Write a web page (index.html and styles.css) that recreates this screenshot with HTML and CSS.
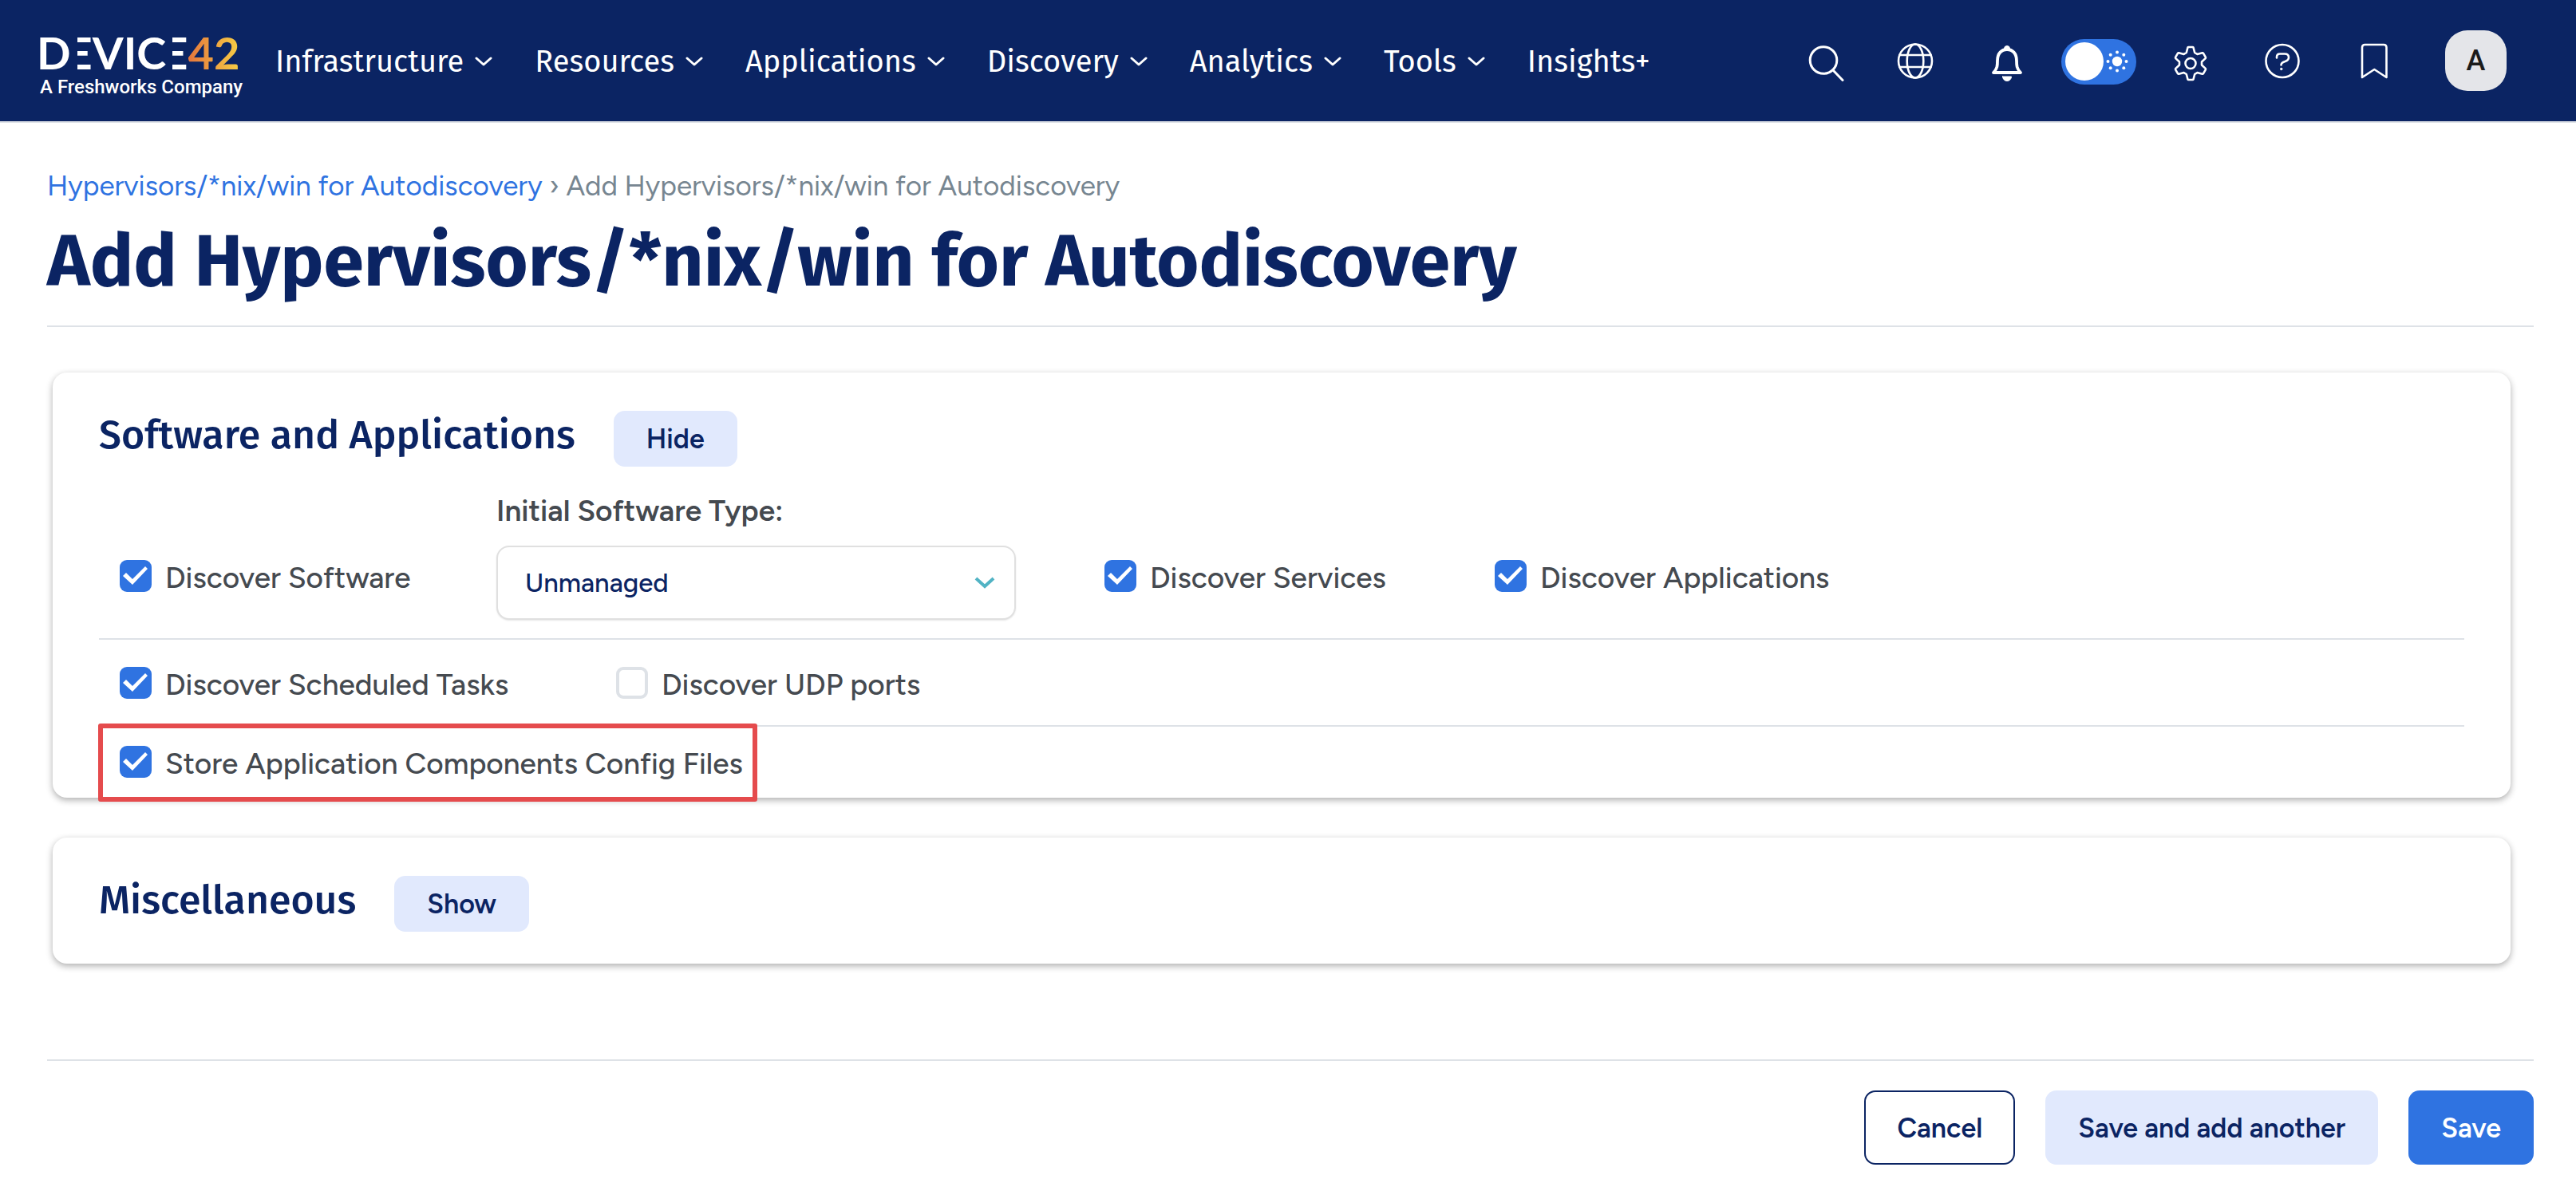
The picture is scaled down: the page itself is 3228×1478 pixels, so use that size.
FILE: index.html
```html
<!DOCTYPE html>
<html lang="en">
<head>
<meta charset="utf-8">
<title>Add Hypervisors/*nix/win for Autodiscovery</title>
<link rel="stylesheet" href="styles.css">
</head>
<body>
<header class="topbar">
  <a class="logo" href="#">
    <span class="logo-name">D<span class="bars">E</span>VIC<span class="bars">E</span><span class="amber">42</span></span>
    <span class="logo-tag">A Freshworks Company</span>
  </a>

  <nav class="menu" aria-label="Main">
    <button class="menu-item" type="button">Infrastructure <svg class="caret" viewBox="0 0 22 14"><path d="M2 3l9 8 9-8"/></svg></button>
    <button class="menu-item" type="button">Resources <svg class="caret" viewBox="0 0 22 14"><path d="M2 3l9 8 9-8"/></svg></button>
    <button class="menu-item" type="button">Applications <svg class="caret" viewBox="0 0 22 14"><path d="M2 3l9 8 9-8"/></svg></button>
    <button class="menu-item" type="button">Discovery <svg class="caret" viewBox="0 0 22 14"><path d="M2 3l9 8 9-8"/></svg></button>
    <button class="menu-item" type="button">Analytics <svg class="caret" viewBox="0 0 22 14"><path d="M2 3l9 8 9-8"/></svg></button>
    <button class="menu-item" type="button">Tools <svg class="caret" viewBox="0 0 22 14"><path d="M2 3l9 8 9-8"/></svg></button>
    <a class="menu-item" href="#">Insights+</a>
  </nav>

  <div class="tools">
    <button class="tool" type="button" aria-label="Search">
      <svg class="icon" viewBox="0 0 52 52"><circle cx="26" cy="25.5" r="16.8"/><path d="M38 38l12 12.5"/></svg>
    </button>
    <button class="tool" type="button" aria-label="Language">
      <svg class="icon thin" viewBox="0 0 52 52"><circle cx="26" cy="26.5" r="21"/><ellipse cx="26" cy="26.5" rx="10.3" ry="21"/><path d="M6.500 19h39M6.500 34h39"/></svg>
    </button>
    <button class="tool" type="button" aria-label="Notifications">
      <svg class="icon bell" viewBox="0 0 52 52"><path d="M9 41c5-5 5-9 5-15 0-9 5-14 12-14s12 5 12 14c0 6 0 10 5 15z"/><path class="solid" d="M22.500 13v-2a3.500 3.500 0 0 1 7 0v2zM20.500 46h11a5.500 5.500 0 0 1-11 0z"/></svg>
    </button>
    <label class="tool theme">
      <input class="theme-input" type="checkbox" role="switch" aria-label="Light theme">
      <svg class="sun" viewBox="0 0 28 28"><circle cx="14" cy="14" r="6.200"/><circle cx="14" cy="2.500" r="2"/><circle cx="14" cy="25.500" r="2"/><circle cx="2.500" cy="14" r="2"/><circle cx="25.500" cy="14" r="2"/><circle cx="5.700" cy="5.700" r="2"/><circle cx="22.300" cy="5.700" r="2"/><circle cx="5.700" cy="22.300" r="2"/><circle cx="22.300" cy="22.300" r="2"/></svg>
    </label>
    <button class="tool" type="button" aria-label="Settings">
      <svg class="icon thin" viewBox="0 0 52 52"><circle cx="26" cy="29.500" r="6.500"/><path d="M22.500 9.500Q22.700 9 23.500 9h5q.8 0 1 .5l1.700 6.500 3.200 1.900 6.300-1.600q.8-.2 1.200.4l2.900 5q.4.800-.1 1.400L40 27.500v4l4.700 4.400q.5.600.1 1.400l-2.900 5q-.4.600-1.200.4l-6.300-1.600-3.200 1.900-1.700 6.500q-.2.500-1 .5h-5q-.8 0-1-.5L20.800 43l-3.200-1.900-6.300 1.600q-.8.200-1.200-.4l-2.900-5q-.4-.8.100-1.400L12 31.500v-4l-4.700-4.400q-.5-.6-.1-1.400l2.900-5q.4-.6 1.200-.4l6.300 1.600 3.200-1.900z"/></svg>
    </button>
    <button class="tool" type="button" aria-label="Help">
      <svg class="icon thin" viewBox="0 0 52 52"><circle cx="26" cy="26.500" r="20.500"/><path d="M19 22.500v-1q0-4 4-4h6q5 0 5 4.500 0 3.500-4.500 5-5 1.500-5 4.500"/><circle class="solid" cx="24.700" cy="36.500" r="1.200"/></svg>
    </button>
    <button class="tool" type="button" aria-label="Bookmarks">
      <svg class="icon thin" viewBox="0 0 52 52"><path d="M11 47V9.500q0-3.500 3.500-3.500h23.500q3.500 0 3.500 3.500V47L26.300 37z"/></svg>
    </button>
    <button class="avatar" type="button" aria-label="Account">A</button>
  </div>
</header>

<main class="page">
  <nav class="crumbs" aria-label="Breadcrumb"><a class="crumb-link" href="#">Hypervisors/*nix/win for Autodiscovery</a> › Add Hypervisors/*nix/win for Autodiscovery</nav>
  <h1 class="title">Add Hypervisors/*nix/win for Autodiscovery</h1>

  <form class="form">
    <section class="card">
      <div class="card-head">
        <h2 class="card-title">Software and Applications</h2>
        <button class="btn btn-small" type="button">Hide</button>
      </div>
      <div class="row row-types">
        <label class="check check-side"><input class="box" type="checkbox" checked>Discover Software</label>
        <div class="field">
          <label class="field-label" for="software-type">Initial Software Type:</label>
          <div class="select-wrap">
            <select class="select" id="software-type"><option>Unmanaged</option><option>Managed</option></select>
            <svg class="select-caret" viewBox="0 0 26 18"><path d="M2 3l11 10L24 3"/></svg>
          </div>
        </div>
        <label class="check check-side"><input class="box" type="checkbox" checked>Discover Services</label>
        <label class="check check-side"><input class="box" type="checkbox" checked>Discover Applications</label>
      </div>
      <div class="row row-pair">
        <label class="check"><input class="box" type="checkbox" checked>Discover Scheduled Tasks</label>
        <label class="check"><input class="box" type="checkbox">Discover UDP ports</label>
      </div>
      <div class="row row-single">
        <label class="check callout"><input class="box" type="checkbox" checked>Store Application Components Config Files</label>
      </div>
    </section>

    <section class="card card-closed">
      <div class="card-head">
        <h2 class="card-title">Miscellaneous</h2>
        <button class="btn btn-small" type="button">Show</button>
      </div>
    </section>

    <div class="actions">
      <button class="btn btn-outline" type="button">Cancel</button>
      <button class="btn" type="button">Save and add another</button>
      <button class="btn btn-primary" type="submit">Save</button>
    </div>
  </form>
</main>
</body>
</html>
```
FILE: styles.css
```css
:root {
  --navy: #0b2463;
  --blue: #2f73e1;
  --pale: #e1e9fd;
  --line: #dee2e7;
  --text: #454a50;
  --head-font: "Fira Sans", "Noto Sans", "Open Sans", sans-serif;
  --body-font: Figtree, Lato, "Liberation Sans", sans-serif;
}

* { box-sizing: border-box; }

body {
  margin: 0;
  background: #fff;
  color: var(--text);
  font: 500 37px/40px var(--body-font);
}

button { font: inherit; cursor: pointer; }

/* Top bar */
.topbar {
  display: flex;
  align-items: center;
  height: 154px;
  padding: 0 87px 0 46px;
  background: var(--navy);
  border-bottom: 2px solid var(--line);
}

.logo {
  display: flex;
  flex-direction: column;
  width: 256px;
  margin: 8px 43px 0 0;
  color: #fff;
  text-decoration: none;
}
.logo-name {
  font: 700 56px/58px Lato, sans-serif;
  white-space: nowrap;
}
/* The wordmark's E has no stem, only its three bars */
.bars {
  margin-left: -5px;
  background: linear-gradient(to right, transparent 13px, #fff 13px);
  background-clip: text;
  -webkit-background-clip: text;
  color: transparent;
}
.amber {
  background: linear-gradient(to right, #e5763c, #f7cf45);
  background-clip: text;
  -webkit-background-clip: text;
  color: transparent;
}
.logo-tag {
  padding-left: 4px;
  font: 500 24px/28px Roboto, sans-serif;
  white-space: nowrap;
}

.menu {
  display: flex;
  align-items: center;
  gap: 53px;
  padding-top: 2px;
}
.menu-item {
  display: flex;
  align-items: center;
  gap: 14px;
  padding: 0;
  border: 0;
  background: none;
  color: #fff;
  font: 400 38px/48px var(--head-font);
  text-decoration: none;
  white-space: nowrap;
}
.caret {
  width: 22px;
  height: 14px;
  fill: none;
  stroke: #fff;
  stroke-width: 3;
  stroke-linecap: round;
  stroke-linejoin: round;
}

.tools {
  display: flex;
  align-items: center;
  margin-left: auto;
}
.tool {
  display: flex;
  justify-content: center;
  width: 115px;
  padding: 0;
  border: 0;
  background: none;
}
.icon {
  width: 52px;
  height: 52px;
  fill: none;
  stroke: #fff;
  stroke-width: 3;
  stroke-linecap: round;
  stroke-linejoin: round;
}
.icon.thin { stroke-width: 2.6; }
.icon.bell { stroke-width: 3.8; }
.icon .solid { fill: #fff; stroke-width: 1; }

.theme {
  position: relative;
  padding-top: 2px;
}
.theme-input {
  appearance: none;
  display: flex;
  align-items: center;
  width: 94px;
  height: 57px;
  margin: 0;
  padding: 0 5px;
  border-radius: 29px;
  background: var(--blue);
}
.theme-input::before {
  content: "";
  width: 48px;
  height: 48px;
  border-radius: 50%;
  background: #fff;
}
.sun {
  position: absolute;
  top: 16px;
  right: 20px;
  width: 28px;
  height: 28px;
  fill: #fff;
}

.avatar {
  width: 77px;
  height: 76px;
  margin-left: 32px;
  padding: 0;
  border: 0;
  border-radius: 28px;
  background: #e4e5e9;
  color: #1b1b1b;
  font: 500 36px/76px Roboto, sans-serif;
}

/* Page heading */
.page { padding: 58px 53px 18px 59px; }

.crumbs {
  color: #778691;
  font-size: 35px;
  font-weight: 400;
  line-height: 42px;
}
.crumb-link {
  color: var(--blue);
  text-decoration: none;
}

.title {
  margin: 26px 0 57px;
  padding-bottom: 32px;
  border-bottom: 2px solid var(--line);
  color: var(--navy);
  font: 700 91px/96px var(--head-font);
}

/* Cards */
.card {
  margin: 0 29px 50px 7px;
  padding: 48px 58px 0;
  border-radius: 18px;
  background: #fff;
  box-shadow: 0 3px 8px rgba(0, 0, 0, .32);
}
.card-closed {
  margin-bottom: 120px;
  padding-bottom: 40px;
}
.card-head {
  display: flex;
  align-items: baseline;
  gap: 48px;
}
.card-title {
  margin: 0;
  color: var(--navy);
  font: 500 50px/48px var(--head-font);
}

.row {
  padding-left: 26px;
  border-bottom: 2px solid var(--line);
}
.row-types {
  display: grid;
  grid-template-columns: 472px 762px 489px auto;
  align-items: end;
  margin-top: 35px;
  padding-bottom: 23px;
}
.row-pair {
  display: grid;
  grid-template-columns: 622px auto;
  padding-top: 34px;
  padding-bottom: 29px;
}
.row-single {
  display: flex;
  padding-top: 24px;
  padding-bottom: 21px;
  border-bottom: 0;
}

.check {
  display: flex;
  align-items: flex-start;
  gap: 17px;
  line-height: 44px;
  white-space: nowrap;
}
.check-side { padding-bottom: 31px; }

.box {
  appearance: none;
  flex: none;
  width: 40px;
  height: 40px;
  margin: 0;
  border: 4px solid var(--line);
  border-radius: 9px;
  background: #fff;
}
.box:checked {
  border: 0;
  background: var(--blue);
}
.box:checked::before {
  content: "";
  display: block;
  width: 40px;
  height: 40px;
  background: #fff;
  clip-path: polygon(4px 20px, 8px 16px, 16px 24px, 32px 8px, 35px 11px, 16px 31px);
}

/* Red frame drawn over the card edge */
.callout { position: relative; }
.callout::after {
  content: "";
  position: absolute;
  inset: -28px -18px -26px -27px;
  border: 6px solid #e54b4d;
  border-radius: 3px;
  pointer-events: none;
}

.field { width: 651px; }
.field-label {
  display: block;
  margin-bottom: 24px;
  font-weight: 600;
}
.select-wrap { position: relative; }
.select {
  appearance: none;
  display: block;
  width: 100%;
  height: 93px;
  padding: 0 80px 0 34px;
  border: 2px solid #e0e0e0;
  border-radius: 16px;
  background: #fff;
  box-shadow: 0 1px 2px rgba(0, 0, 0, .1);
  color: var(--navy);
  font: 500 33px/40px var(--body-font);
}
.select-caret {
  position: absolute;
  top: 38px;
  right: 26px;
  width: 26px;
  height: 18px;
  fill: none;
  stroke: #51b3c4;
  stroke-width: 4;
  pointer-events: none;
}

/* Buttons */
.btn {
  height: 93px;
  padding: 2px 41px 0;
  border: 0;
  border-radius: 14px;
  background: var(--pale);
  color: var(--navy);
  font-size: 34px;
  font-weight: 600;
  white-space: nowrap;
}
.btn-small { height: 70px; }
.btn-outline {
  padding: 2px 39px 0;
  border: 2px solid var(--navy);
  background: #fff;
}
.btn-primary {
  background: var(--blue);
  color: #fff;
}

.actions {
  display: flex;
  justify-content: flex-end;
  gap: 38px;
  padding-top: 37px;
  border-top: 2px solid var(--line);
}
```
